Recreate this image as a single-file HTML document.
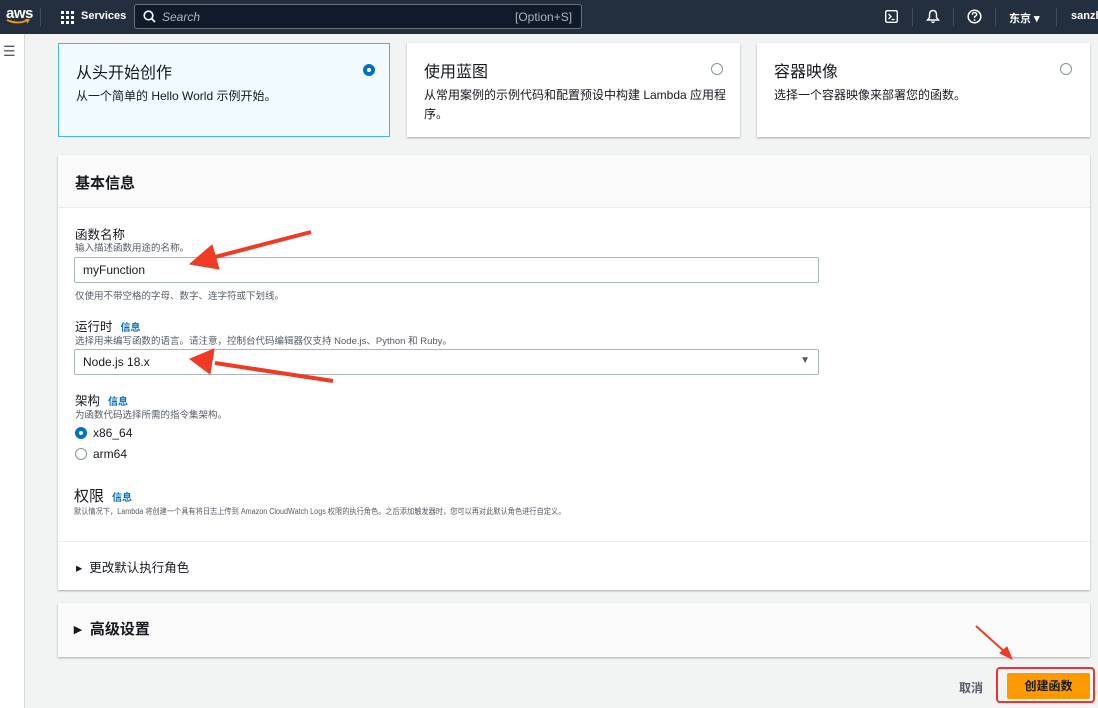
<!DOCTYPE html>
<html><head><meta charset="utf-8"><style>
*{box-sizing:border-box;margin:0;padding:0}
body{width:1098px;height:708px;overflow:hidden;background:#f2f3f3;font-family:"Liberation Sans","Noto Sans CJK SC",sans-serif;color:#16191f;position:relative}
.abs{position:absolute}
.nav{left:0;top:0;width:1098px;height:34px;background:#232f3e;color:#fff}
.side{left:0;top:34px;width:25px;height:674px;background:#fff;border-right:1px solid #d5dbdb}
.card{background:#fff;box-shadow:0 1px 2px rgba(0,0,0,.3);}
.card h3{font-size:16px;font-weight:400;position:absolute;left:17px;top:15px}
.card p{font-size:12px;position:absolute;left:17px;top:43px;line-height:19px}
.radio{width:12px;height:12px;border-radius:50%;border:1px solid #879596;background:#fff}
.sel{border:4px solid #0073bb}
.lbl{font-size:12.5px;left:75px}
.sub{font-size:9.5px;color:#545b64;left:75px}
.info{color:#0073bb;font-size:10px;font-weight:bold;margin-left:8px}
.inp{left:74px;width:745px;height:26px;border:1px solid #aab7b8;background:#fff;font-size:12px;padding:5px 8px;border-radius:2px}
</style></head><body>
<div class="abs nav">
 <div class="abs" style="left:6px;top:5px;font-size:15px;font-weight:bold;letter-spacing:-.5px">aws</div>
 <svg class="abs" style="left:6px;top:19px" width="24" height="6"><path d="M1 1 Q12 6 22 1" stroke="#f90" stroke-width="1.8" fill="none"/><path d="M19 0 L23 1 L21 4" stroke="#f90" stroke-width="1.2" fill="none"/></svg>
 <div class="abs" style="left:40px;top:8px;width:1px;height:18px;background:#414d5c"></div>
 <svg class="abs" style="left:61px;top:11px" width="13" height="13" fill="#fff"><rect x="0" y="0" width="3" height="3"/><rect x="5" y="0" width="3" height="3"/><rect x="10" y="0" width="3" height="3"/><rect x="0" y="5" width="3" height="3"/><rect x="5" y="5" width="3" height="3"/><rect x="10" y="5" width="3" height="3"/><rect x="0" y="10" width="3" height="3"/><rect x="5" y="10" width="3" height="3"/><rect x="10" y="10" width="3" height="3"/></svg>
 <div class="abs" style="left:81px;top:10px;font-size:11px;font-weight:bold">Services</div>
 <div class="abs" style="left:134px;top:4px;width:448px;height:25px;border:1px solid #687078;border-radius:3px;background:#0f1b2a"></div>
 <svg class="abs" style="left:143px;top:10px" width="13" height="13"><circle cx="5.5" cy="5.5" r="4.3" stroke="#fff" stroke-width="1.6" fill="none"/><path d="M8.7 8.7 L12 12" stroke="#fff" stroke-width="1.8"/></svg>
 <div class="abs" style="left:162px;top:10px;font-size:12px;font-style:italic;color:#aab7b8">Search</div>
 <div class="abs" style="left:515px;top:10px;font-size:12px;color:#aab7b8">[Option+S]</div>
 <svg class="abs" style="left:885px;top:10px" width="13" height="13"><rect x=".7" y=".7" width="11.6" height="11.6" rx="1.5" stroke="#fff" stroke-width="1.4" fill="none"/><path d="M3.5 4 L6 6.5 L3.5 9 M6.5 9.5 H9.5" stroke="#fff" stroke-width="1.3" fill="none"/></svg>
 <div class="abs" style="left:912px;top:8px;width:1px;height:18px;background:#414d5c"></div>
 <svg class="abs" style="left:926px;top:9px" width="14" height="15"><path d="M7 1.5 C4 1.5 3.5 4 3.5 6 L3.5 8.5 L1.5 11 H12.5 L10.5 8.5 L10.5 6 C10.5 4 10 1.5 7 1.5 Z" stroke="#fff" stroke-width="1.4" fill="none"/><path d="M5.5 12.5 Q7 14.5 8.5 12.5" stroke="#fff" stroke-width="1.3" fill="none"/></svg>
 <div class="abs" style="left:953px;top:8px;width:1px;height:18px;background:#414d5c"></div>
 <svg class="abs" style="left:967px;top:9px" width="15" height="15"><circle cx="7.5" cy="7.5" r="6.3" stroke="#fff" stroke-width="1.5" fill="none"/><path d="M5.3 5.8 Q5.5 3.6 7.6 3.6 Q9.7 3.7 9.7 5.5 Q9.6 6.8 7.6 7.6 V9" stroke="#fff" stroke-width="1.4" fill="none"/><circle cx="7.6" cy="11" r=".9" fill="#fff"/></svg>
 <div class="abs" style="left:995px;top:8px;width:1px;height:18px;background:#414d5c"></div>
 <div class="abs" style="left:1009px;top:10px;font-size:11px;font-weight:bold">东京 ▾</div>
 <div class="abs" style="left:1056px;top:8px;width:1px;height:18px;background:#414d5c"></div>
 <div class="abs" style="left:1071px;top:10px;font-size:11px;font-weight:bold">sanzh</div>
</div>
<div class="abs side"><div class="abs" style="left:3px;top:10px;font-size:14px;color:#545b64;line-height:14px">☰</div></div>

<div class="abs card" style="left:58px;top:43px;width:332px;height:94px;background:#f1faff;border:1px solid #44b9d6;box-shadow:none">
 <h3>从头开始创作</h3><p>从一个简单的 Hello World 示例开始。</p>
 <div class="abs radio sel" style="left:304px;top:20px"></div></div>
<div class="abs card" style="left:407px;top:43px;width:333px;height:94px">
 <h3>使用蓝图</h3><p>从常用案例的示例代码和配置预设中构建 Lambda 应用程<br>序。</p>
 <div class="abs radio" style="left:304px;top:20px"></div></div>
<div class="abs card" style="left:757px;top:43px;width:333px;height:94px">
 <h3>容器映像</h3><p>选择一个容器映像来部署您的函数。</p>
 <div class="abs radio" style="left:303px;top:20px"></div></div>

<div class="abs card" style="left:58px;top:155px;width:1032px;height:435px">
 <div class="abs" style="left:0;top:0;width:1032px;height:53px;background:#fafafa;border-bottom:1px solid #eaeded"></div>
 <div class="abs" style="left:17px;top:17px;font-size:15px;font-weight:bold">基本信息</div>
 <div class="abs" style="left:0;top:386px;width:1032px;height:1px;background:#eaeded"></div>
 <div class="abs" style="left:18px;top:402px;font-size:12.5px;color:#16191f">▸ &nbsp;更改默认执行角色</div>
</div>
<div class="abs lbl" style="top:224px">函数名称</div>
<div class="abs sub" style="top:240px">输入描述函数用途的名称。</div>
<div class="abs inp" style="top:257px">myFunction</div>
<div class="abs sub" style="top:288px">仅使用不带空格的字母、数字、连字符或下划线。</div>
<div class="abs lbl" style="top:316px">运行时<span class="info">信息</span></div>
<div class="abs sub" style="top:333px">选择用来编写函数的语言。请注意，控制台代码编辑器仅支持 Node.js、Python 和 Ruby。</div>
<div class="abs inp" style="top:349px">Node.js 18.x<span style="position:absolute;right:8px;top:5px;font-size:10px;color:#545b64">▼</span></div>
<div class="abs lbl" style="top:390px">架构<span class="info">信息</span></div>
<div class="abs sub" style="top:407px">为函数代码选择所需的指令集架构。</div>
<div class="abs radio sel" style="left:75px;top:427px"></div><div class="abs" style="left:93px;top:426px;font-size:12px">x86_64</div>
<div class="abs radio" style="left:75px;top:448px"></div><div class="abs" style="left:93px;top:447px;font-size:12px">arm64</div>
<div class="abs" style="left:74px;top:485px;font-size:15px">权限<span class="info">信息</span></div>
<div class="abs" style="left:74px;top:506px;font-size:8px;color:#545b64;transform:scaleX(.9);transform-origin:0 0">默认情况下，Lambda 将创建一个具有将日志上传到 Amazon CloudWatch Logs 权限的执行角色。之后添加触发器时，您可以再对此默认角色进行自定义。</div>

<div class="abs card" style="left:58px;top:603px;width:1032px;height:54px;background:#fafafa">
 <div class="abs" style="left:16px;top:15px;font-size:15px;font-weight:bold">▸ &nbsp;高级设置</div></div>

<div class="abs" style="left:959px;top:679px;font-size:12px;font-weight:bold;color:#545b64">取消</div>
<div class="abs" style="left:996px;top:667px;width:99px;height:36px;border:2px solid #e33;border-radius:4px"></div>
<div class="abs" style="left:1007px;top:673px;width:83px;height:26px;background:#ff9900;border-radius:2px;font-size:12px;font-weight:bold;text-align:center;line-height:26px">创建函数</div>

<svg class="abs" style="left:0;top:0" width="1098" height="708">
 <g fill="#f03a23" stroke="#f03a23">
 <path d="M311 232 L215 257" stroke-width="4"/><path d="M190 264 L212 245 L219 269 Z"/>
 <path d="M333 381 L215 363" stroke-width="4"/><path d="M190 359 L214 349 L210 374 Z"/>
 <path d="M976 626 L1006 653" stroke-width="2"/><path d="M1012 659 L1000 653 L1007 647 Z"/>
 </g>
</svg>
</body></html>
